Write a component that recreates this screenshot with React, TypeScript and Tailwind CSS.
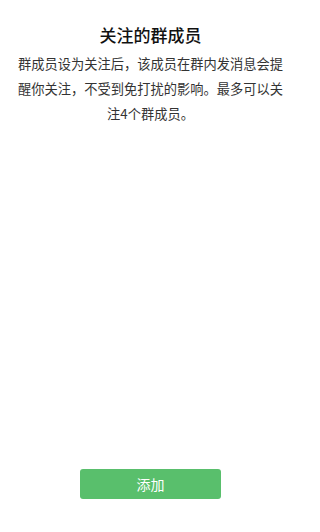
export default function App() {
  return (
    <div
      className="flex h-[532px] w-[309px] flex-col bg-white pr-[8px]"
      style={{ fontFamily: '"Noto Sans CJK SC", "Noto Sans", sans-serif' }}
    >
      <div className="flex flex-1 flex-col items-center px-4 pt-[23px]">
        <h1 className="text-[17px] font-medium leading-[24px] text-[#111]">关注的群成员</h1>
        <p className="mt-[4px] text-center text-[13.25px] leading-[25px] text-[#333]">
          群成员设为关注后，该成员在群内发消息会提醒你关注，不受到免打扰的影响。最多可以关注4个群成员。
        </p>
      </div>
      <div className="flex justify-center pb-[33px]">
        <button className="h-[30px] w-[141px] rounded-[3px] bg-[#59bf6c] text-[14px] text-white">
          添加
        </button>
      </div>
    </div>
  );
}
